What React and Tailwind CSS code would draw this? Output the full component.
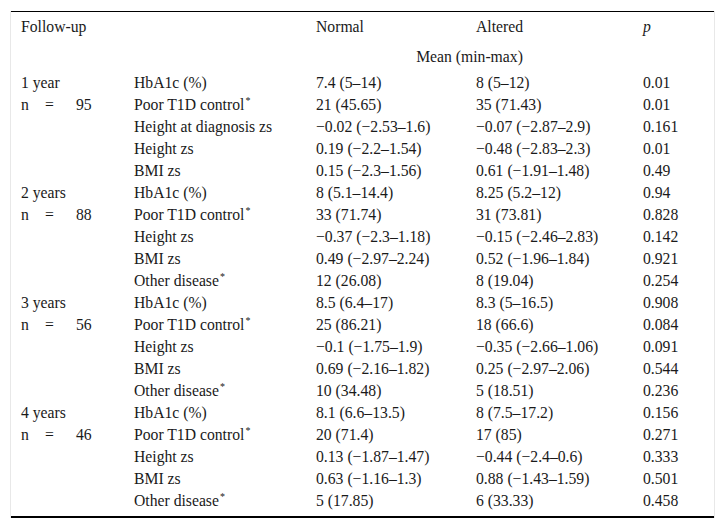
const groups = [
  {
    label: "1 year",
    n: "95",
    rows: [
      ["HbA1c (%)", false, "7.4 (5–14)", "8 (5–12)", "0.01"],
      ["Poor T1D control", true, "21 (45.65)", "35 (71.43)", "0.01"],
      ["Height at diagnosis zs", false, "−0.02 (−2.53–1.6)", "−0.07 (−2.87–2.9)", "0.161"],
      ["Height zs", false, "0.19 (−2.2–1.54)", "−0.48 (−2.83–2.3)", "0.01"],
      ["BMI zs", false, "0.15 (−2.3–1.56)", "0.61 (−1.91–1.48)", "0.49"],
    ],
  },
  {
    label: "2 years",
    n: "88",
    rows: [
      ["HbA1c (%)", false, "8 (5.1–14.4)", "8.25 (5.2–12)", "0.94"],
      ["Poor T1D control", true, "33 (71.74)", "31 (73.81)", "0.828"],
      ["Height zs", false, "−0.37 (−2.3–1.18)", "−0.15 (−2.46–2.83)", "0.142"],
      ["BMI zs", false, "0.49 (−2.97–2.24)", "0.52 (−1.96–1.84)", "0.921"],
      ["Other disease", true, "12 (26.08)", "8 (19.04)", "0.254"],
    ],
  },
  {
    label: "3 years",
    n: "56",
    rows: [
      ["HbA1c (%)", false, "8.5 (6.4–17)", "8.3 (5–16.5)", "0.908"],
      ["Poor T1D control", true, "25 (86.21)", "18 (66.6)", "0.084"],
      ["Height zs", false, "−0.1 (−1.75–1.9)", "−0.35 (−2.66–1.06)", "0.091"],
      ["BMI zs", false, "0.69 (−2.16–1.82)", "0.25 (−2.97–2.06)", "0.544"],
      ["Other disease", true, "10 (34.48)", "5 (18.51)", "0.236"],
    ],
  },
  {
    label: "4 years",
    n: "46",
    rows: [
      ["HbA1c (%)", false, "8.1 (6.6–13.5)", "8 (7.5–17.2)", "0.156"],
      ["Poor T1D control", true, "20 (71.4)", "17 (85)", "0.271"],
      ["Height zs", false, "0.13 (−1.87–1.47)", "−0.44 (−2.4–0.6)", "0.333"],
      ["BMI zs", false, "0.63 (−1.16–1.3)", "0.88 (−1.43–1.59)", "0.501"],
      ["Other disease", true, "5 (17.85)", "6 (33.33)", "0.458"],
    ],
  },
];

const cols = "grid grid-cols-[113px_182px_160px_167px_80px]";

const App = () => {
  return (
    <div className="w-[725px] h-[529px] bg-white pt-[11px] [font-family:'Liberation_Serif',serif] text-[15.7px] text-[#1a1a1a] leading-none">
      <div className="ml-[10px] w-[705px] border-x border-[#e8e8e8]">
        <div className="border-t border-black border-b-2 pb-1">
          {/* Header */}
          <div className={`${cols} h-[30px] items-center`}>
            <div className="pl-[10px]">Follow-up</div>
            <div></div>
            <div className="pl-[10px]">Normal</div>
            <div className="pl-[10px]">Altered</div>
            <div className="pl-[10px] italic">p</div>
          </div>
          <div className={`${cols} h-[30px] items-center`}>
            <div></div>
            <div></div>
            <div className="col-span-2 text-center">Mean (min-max)</div>
            <div></div>
          </div>

          {/* Body */}
          {groups.map((g) =>
            g.rows.map((r, i) => (
              <div key={g.label + i} className={`${cols} h-[22px] items-center`}>
                <div className="pl-[10px]">
                  {i === 0 && g.label}
                  {i === 1 && (
                    <span className="flex">
                      <span className="w-[24px]">n</span>
                      <span className="w-[31px]">=</span>
                      <span>{g.n}</span>
                    </span>
                  )}
                </div>
                <div className="pl-[10px] whitespace-nowrap">
                  {r[0]}
                  {r[1] && <span className="text-[10px] relative -top-[6px] ml-[1px]">*</span>}
                </div>
                <div className="pl-[10px] whitespace-nowrap">{r[2]}</div>
                <div className="pl-[10px] whitespace-nowrap">{r[3]}</div>
                <div className="pl-[10px]">{r[4]}</div>
              </div>
            ))
          )}
        </div>
      </div>
    </div>
  );
};

export default App;
